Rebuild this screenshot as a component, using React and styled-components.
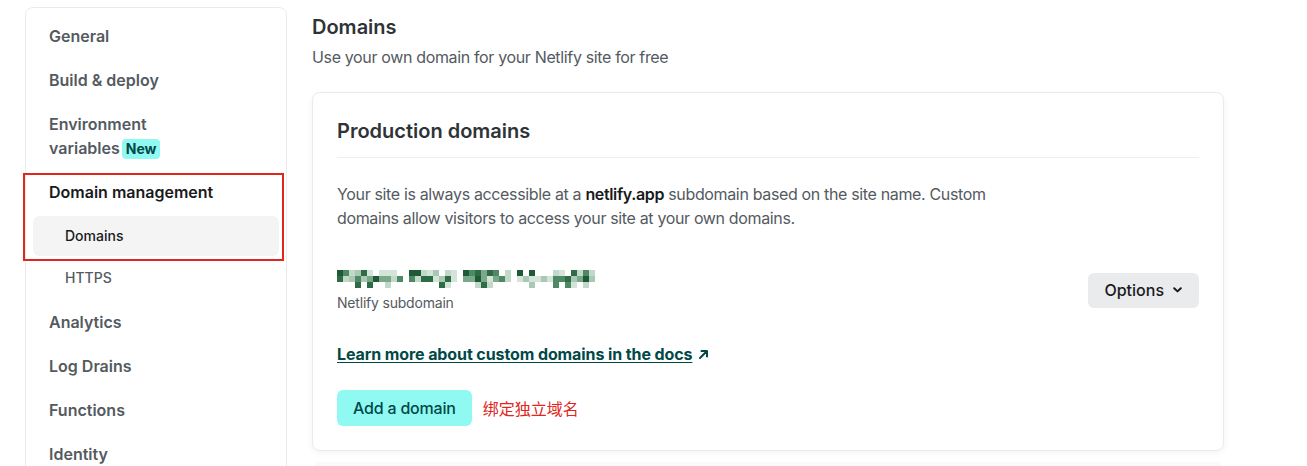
import React from "react";
import styled, { createGlobalStyle } from "styled-components";

const GlobalStyle = createGlobalStyle`
  body {
    margin: 0;
    background: #ffffff;
    font-family: Inter, "Noto Sans", "Noto Sans CJK SC", sans-serif;
    color: #181a1c;
    -webkit-font-smoothing: antialiased;
  }
`;

const Page = styled.div`
  display: flex;
  align-items: flex-start;
  gap: 25px;
  padding: 7px 0 0 25px;
  height: 459px;
  overflow: hidden;
`;

const Sidebar = styled.nav`
  width: 262px;
  box-sizing: border-box;
  border: 1px solid #e9ebed;
  border-radius: 8px;
  padding: 6px 7px 40px;
  display: flex;
  flex-direction: column;
`;

const NavItem = styled.div`
  padding: 10px 16px;
  font-size: 16px;
  line-height: 24px;
  font-weight: 600;
  color: ${(p) => (p.active ? "#181a1c" : "#545a61")};
`;

const Badge = styled.span`
  display: inline-block;
  margin-left: 2px;
  padding: 0 4px;
  border-radius: 4px;
  background: #8ff9f2;
  color: #014847;
  font-size: 14px;
  line-height: 20px;
  font-weight: 700;
`;

const Group = styled.div`
  position: relative;
  &::after {
    content: "";
    position: absolute;
    left: -10px;
    right: -5px;
    top: 3px;
    bottom: 39px;
    border: 2px solid #e0261d;
    pointer-events: none;
  }
`;

const SubList = styled.div`
  display: flex;
  flex-direction: column;
  gap: 2px;
  padding: 2px 0;
`;

const SubItem = styled.div`
  padding: 8px 32px;
  border-radius: 6px;
  font-size: 14px;
  line-height: 24px;
  font-weight: 500;
  background: ${(p) => (p.active ? "#f4f4f5" : "transparent")};
  color: ${(p) => (p.active ? "#181a1c" : "#545a61")};
`;

const Main = styled.main`
  width: 912px;
  padding-top: 6px;
`;

const Title = styled.h1`
  margin: 0;
  font-size: 20px;
  line-height: 28px;
  font-weight: 600;
  color: #2e3338;
`;

const Subtitle = styled.p`
  margin: 4px 0 0;
  font-size: 16px;
  line-height: 24px;
  letter-spacing: -0.35px;
  color: #545a61;
`;

const Card = styled.section`
  margin-top: 23px;
  border: 1px solid #e9ebed;
  border-radius: 8px;
  background: #fff;
  box-shadow: 0 2px 6px rgba(0, 0, 0, 0.05);
  padding: 24px 24px 24px;
`;

const NextCard = styled.div`
  margin-top: 11px;
  height: 40px;
  background: #fafafa;
  border-radius: 8px;
`;

const CardTitle = styled.h2`
  margin: 0;
  padding-bottom: 12px;
  border-bottom: 1px solid #eceef0;
  font-size: 20px;
  line-height: 28px;
  font-weight: 600;
  color: #2e3338;
`;

const Text = styled.p`
  margin: 24px 0 0;
  max-width: 660px;
  font-size: 16px;
  line-height: 24px;
  letter-spacing: -0.35px;
  color: #545a61;
  b {
    font-weight: 600;
    color: #181a1c;
  }
`;

const DomainRow = styled.div`
  margin-top: 40px;
  display: flex;
  align-items: center;
  justify-content: space-between;
`;

const DomainInfo = styled.div`
  display: flex;
  flex-direction: column;
  gap: 5px;
`;

const Label = styled.span`
  font-size: 14px;
  line-height: 20px;
  letter-spacing: -0.2px;
  color: #545a61;
`;

const OptionsButton = styled.button`
  display: flex;
  align-items: center;
  gap: 9px;
  height: 35px;
  padding: 0 17px 0 16px;
  margin-top: -3px;
  border: none;
  border-radius: 6px;
  background: #e9ebed;
  color: #181a1c;
  font-family: inherit;
  font-size: 16px;
  font-weight: 500;
`;

const DocsLink = styled.a`
  display: inline-flex;
  align-items: center;
  gap: 6px;
  margin-top: 29px;
  font-size: 16px;
  line-height: 24px;
  font-weight: 700;
  letter-spacing: -0.1px;
  color: #014847;
  span {
    text-decoration: underline;
    text-underline-offset: 2px;
  }
`;

const Actions = styled.div`
  margin-top: 24px;
  display: flex;
  align-items: center;
  gap: 11px;
`;

const PrimaryButton = styled.button`
  height: 36px;
  padding: 0 16px;
  border: none;
  border-radius: 6px;
  background: #8ff9f2;
  color: #014847;
  font-family: inherit;
  font-size: 16px;
  font-weight: 500;
  letter-spacing: -0.2px;
`;

const Note = styled.span`
  font-size: 16px;
  color: #e0261d;
  font-family: "Noto Sans CJK SC", sans-serif;
`;

const greens = ["#2f6b45", "#4d8a63", "#7aa88a", "#a9c9b4", "#d3e5d9", "#c2d9c9", "#1f5a36"];

function blurCells() {
  let seed = 11;
  const rnd = () => {
    seed = (seed * 9301 + 49297) % 233280;
    return seed / 233280;
  };
  const gaps = [[64, 72], [116, 125], [173, 179]];
  const cells = [];
  for (let x = 0; x < 258; x += 6) {
    if (gaps.some(([a, b]) => x >= a && x < b)) continue;
    for (let r = 0; r < 3; r++) {
      const v = rnd();
      if (r === 2 && v < 0.8) continue;
      if (r === 0 && v < 0.25) continue;
      cells.push({ x, y: r * 6, c: greens[Math.floor(rnd() * greens.length)] });
    }
  }
  return cells;
}

const cells = blurCells();

const BlurredName = () => (
  <svg width="258" height="18" viewBox="0 0 258 18">
    {cells.map((c, i) => (
      <rect key={i} x={c.x} y={c.y} width="6" height="6" fill={c.c} />
    ))}
  </svg>
);

const Chevron = () => (
  <svg width="9" height="6" viewBox="0 0 9 6">
    <path d="M1.2 1.2 L4.5 4.4 L7.8 1.2" fill="none" stroke="#181a1c" strokeWidth="2" strokeLinecap="round" strokeLinejoin="round" />
  </svg>
);

const ArrowOut = () => (
  <svg width="11" height="11" viewBox="0 0 11 11">
    <path d="M2 9 L9 2 M3.5 2 H9 V7.5" fill="none" stroke="#014847" strokeWidth="2" strokeLinecap="round" strokeLinejoin="round" />
  </svg>
);

export default function App() {
  return (
    <>
      <GlobalStyle />
      <Page>
        <Sidebar>
          <NavItem>General</NavItem>
          <NavItem>Build &amp; deploy</NavItem>
          <NavItem>
            Environment
            <br />
            variables<Badge>New</Badge>
          </NavItem>
          <Group>
            <NavItem active>Domain management</NavItem>
            <SubList>
              <SubItem active>Domains</SubItem>
              <SubItem>HTTPS</SubItem>
            </SubList>
          </Group>
          <NavItem>Analytics</NavItem>
          <NavItem>Log Drains</NavItem>
          <NavItem>Functions</NavItem>
          <NavItem>Identity</NavItem>
        </Sidebar>
        <Main>
          <Title>Domains</Title>
          <Subtitle>Use your own domain for your Netlify site for free</Subtitle>
          <Card>
            <CardTitle>Production domains</CardTitle>
            <Text>
              Your site is always accessible at a <b>netlify.app</b> subdomain based on the site name. Custom
              domains allow visitors to access your site at your own domains.
            </Text>
            <DomainRow>
              <DomainInfo>
                <BlurredName />
                <Label>Netlify subdomain</Label>
              </DomainInfo>
              <OptionsButton>
                Options <Chevron />
              </OptionsButton>
            </DomainRow>
            <DocsLink>
              <span>Learn more about custom domains in the docs</span>
              <ArrowOut />
            </DocsLink>
            <Actions>
              <PrimaryButton>Add a domain</PrimaryButton>
              <Note>绑定独立域名</Note>
            </Actions>
          </Card>
          <NextCard />
        </Main>
      </Page>
    </>
  );
}
